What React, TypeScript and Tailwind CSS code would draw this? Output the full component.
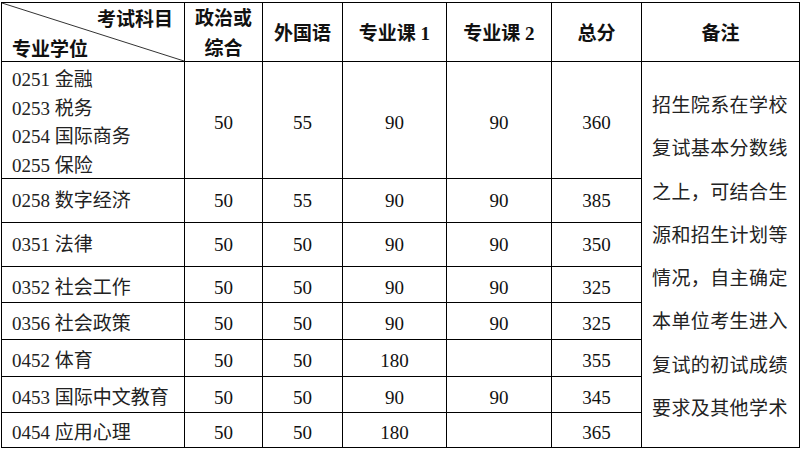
import React from "react";

type Row = { name: string[]; a: string; b: string; c: string; d: string; t: string; pad: string };

const rows: Row[] = [
  { name: ["0251 金融", "0253 税务", "0254 国际商务", "0255 保险"], a: "50", b: "55", c: "90", d: "90", t: "360", pad: "pt-[6px]" },
  { name: ["0258 数字经济"], a: "50", b: "55", c: "90", d: "90", t: "385", pad: "pt-[2px]" },
  { name: ["0351 法律"], a: "50", b: "50", c: "90", d: "90", t: "350", pad: "pt-[2px]" },
  { name: ["0352 社会工作"], a: "50", b: "50", c: "90", d: "90", t: "325", pad: "pt-[7px]" },
  { name: ["0356 社会政策"], a: "50", b: "50", c: "90", d: "90", t: "325", pad: "pt-[7px]" },
  { name: ["0452 体育"], a: "50", b: "50", c: "180", d: "", t: "355", pad: "pt-[6px]" },
  { name: ["0453 国际中文教育"], a: "50", b: "50", c: "90", d: "90", t: "345", pad: "pt-[7px]" },
  { name: ["0454 应用心理"], a: "50", b: "50", c: "180", d: "", t: "365", pad: "pt-[7px]" },
];

const notes = [
  "招生院系在学校",
  "复试基本分数线",
  "之上，可结合生",
  "源和招生计划等",
  "情况，自主确定",
  "本单位考生进入",
  "复试的初试成绩",
  "要求及其他学术",
];

const Num = ({ v, pad }: { v: string; pad: string }) => (
  <div className={`bg-white flex items-center justify-center ${pad}`}>{v}</div>
);

export default function App() {
  return (
    <div
      className="w-[800px] h-[449px] bg-white overflow-hidden text-[#111] text-[19px]"
      style={{ fontFamily: '"Liberation Serif", "Noto Sans CJK SC", serif' }}
    >
      <div className="ml-[1px] mt-[2px] w-fit grid grid-cols-[182px_77px_79px_103px_104px_89px_157px] grid-rows-[58px_116px_43px_43px_35px_36px_36px_35px_34px] gap-px bg-black p-px">
        {/* header */}
        <div className="relative bg-white flex flex-col justify-between font-bold leading-[30px] pt-[2px]">
          <svg className="absolute inset-0 w-full h-full" viewBox="0 0 182 58" preserveAspectRatio="none">
            <line x1="0" y1="0" x2="182" y2="58" stroke="#333" strokeWidth="1" />
          </svg>
          <div className="text-right pr-[11px]">考试科目</div>
          <div className="text-left pl-[10px]">专业学位</div>
        </div>
        <div className="bg-white flex flex-col items-center justify-center font-bold leading-[30px] pt-[4px]">
          <div>政治或</div>
          <div>综合</div>
        </div>
        <div className="bg-white flex items-center justify-center font-bold pt-[5px]">外国语</div>
        <div className="bg-white flex items-center justify-center font-bold pt-[5px]">专业课 1</div>
        <div className="bg-white flex items-center justify-center font-bold pt-[5px]">专业课 2</div>
        <div className="bg-white flex items-center justify-center font-bold pt-[5px]">总分</div>
        <div className="bg-white flex items-center justify-center font-bold pt-[5px]">备注</div>

        {/* notes */}
        <div className="col-start-7 row-start-2 row-span-8 bg-white overflow-hidden pl-[10px] pt-[22px] leading-[43.3px] tracking-[0.4px] text-[#222]">
          {notes.map((n) => (
            <div key={n} className="whitespace-nowrap">
              {n}
            </div>
          ))}
        </div>

        {rows.map((r, i) => (
          <React.Fragment key={i}>
            <div className={`bg-white flex flex-col justify-center pl-[10px] leading-[28.5px] text-[#222] ${r.pad}`}>
              {r.name.map((n) => (
                <div key={n} className="whitespace-nowrap">
                  {n}
                </div>
              ))}
            </div>
            <Num v={r.a} pad={r.pad} />
            <Num v={r.b} pad={r.pad} />
            <Num v={r.c} pad={r.pad} />
            <Num v={r.d} pad={r.pad} />
            <Num v={r.t} pad={r.pad} />
          </React.Fragment>
        ))}
      </div>
    </div>
  );
}
